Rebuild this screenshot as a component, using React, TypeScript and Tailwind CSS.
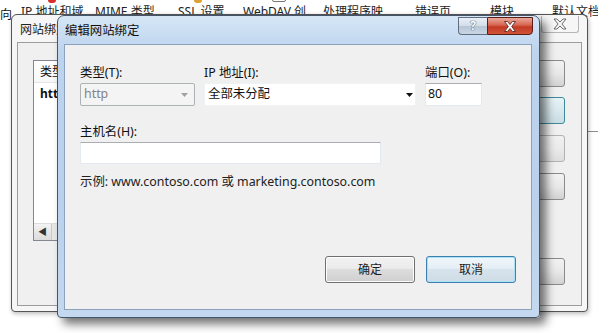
import React from 'react';

const ui = "font-['Noto_Sans','Noto_Sans_CJK_SC',sans-serif]";

const WinButton = ({ label, focused = false }: { label: string; focused?: boolean }) => (
  <div
    className={`w-[90px] h-[27px] rounded-[3px] border flex items-center justify-center text-[12px] text-[#1b1b1b] ${
      focused
        ? 'border-[#3c7fb1] bg-[linear-gradient(#f1f7fb_0%,#e4eef5_45%,#d7e3ec_50%,#cfdbe5_100%)] shadow-[inset_0_0_0_1px_#a9e1f7]'
        : 'border-[#707070] bg-[linear-gradient(#f2f2f2_0%,#ebebeb_45%,#dddddd_50%,#cfcfcf_100%)] shadow-[inset_0_0_0_1px_#fcfcfc]'
    }`}
  >
    {label}
  </div>
);

const BgButton = ({ focused = false }: { focused?: boolean }) => (
  <div
    className={`w-[90px] h-[27px] rounded-[3px] border ${
      focused
        ? 'border-[#3c8a9c] bg-[linear-gradient(#e7f3f7,#c9dde4)]'
        : 'border-[#8a8a8a] bg-[linear-gradient(#f2f2f2_0%,#e8e8e8_50%,#d2d2d2_100%)]'
    }`}
  />
);

export default function App() {
  return (
    <div className={`relative w-[598px] h-[333px] overflow-hidden bg-white ${ui}`}>
      {/* background app strip */}
      <div className="absolute left-0 top-[3px] flex text-[12px] leading-[18px] text-[#222] whitespace-nowrap">
        <span className="ml-[21px] w-[74px]">IP 地址和域</span>
        <span className="w-[83px]">MIME 类型</span>
        <span className="w-[65px]">SSL 设置</span>
        <span className="w-[80px]">WebDAV 创</span>
        <span className="w-[92px]">处理程序映</span>
        <span className="w-[75px]">错误页</span>
        <span className="w-[62px]">模块</span>
        <span>默认文档</span>
      </div>
      <div className="absolute left-[48px] top-[-3px] w-[8px] h-[6px] rounded-full bg-[#d9302c]" />
      <div className="absolute left-[194px] top-[-3px] w-[8px] h-[6px] rounded-full bg-[#e0a030]" />
      <div className="absolute left-[272px] top-[-3px] w-[14px] h-[5px] rounded-[2px] border border-[#777]" />
      <span className="absolute left-0 top-[8px] text-[12px] leading-[14px] text-[#111]">向</span>
      <div className="absolute left-[586px] top-[131px] w-[12px] h-px bg-[#8f8f8f]" />

      {/* background window: 网站绑定 */}
      <div className="absolute left-[11px] top-[14px] w-[577px] h-[298px] rounded-t-[6px] rounded-b-[4px] border border-[#555] bg-[#f6f6f6] shadow-[1px_2px_4px_rgba(0,0,0,0.25)] flex flex-col">
        <div className="h-[27px] flex items-center justify-between pl-[8px] pr-[8px]">
          <span className="text-[12px] text-[#222] mt-[2px]">网站绑定</span>
          <div className="w-[38px] h-[17px] rounded-b-[3px] border border-t-0 border-[#b6b6b6] flex items-center justify-center -mt-[8px]">
            <svg width="16" height="12" viewBox="0 0 16 12">
              <path d="M2 1 L5 1 L8 4 L11 1 L14 1 L10 6 L14 11 L11 11 L8 8 L5 11 L2 11 L6 6 Z" fill="#f4f4f4" stroke="#6d6d6d" strokeWidth="1" />
            </svg>
          </div>
        </div>
        <div className="flex-1 mx-[5px] mb-[5px] border border-[#9c9c9c] bg-[#f0f0f0] flex pt-[17px] pl-[15px] pr-[16px]">
          <div className="flex-1 h-[181px] border border-[#828790] bg-white flex flex-col text-[12px] text-[#111]">
            <div className="h-[22px] flex items-center pl-[6px] border-b border-[#e5e5e5] bg-[linear-gradient(#fff,#f7f8fa)]">类型</div>
            <div className="h-[22px] flex items-center pl-[6px] font-bold">http</div>
            <div className="flex-1" />
            <div className="h-[17px] flex bg-[#e8e8e8] border-t border-[#dcdcdc]">
              <div className="w-[18px] flex items-center justify-center text-[9px] text-[#333] border-r border-[#c8c8c8] bg-[linear-gradient(#f3f3f3,#dcdcdc)]">◀</div>
            </div>
          </div>
          <div className="w-[90px] ml-[10px] flex flex-col">
            <BgButton />
            <div className="mt-[10px]"><BgButton focused /></div>
            <div className="mt-[11px] opacity-60"><BgButton /></div>
            <div className="mt-[11px]"><BgButton /></div>
            <div className="mt-[58px]"><BgButton /></div>
          </div>
        </div>
      </div>

      {/* front dialog: 编辑网站绑定 */}
      <div className="absolute left-[57px] top-[15px] w-[483px] h-[303px] rounded-t-[7px] rounded-b-[4px] border border-[#44546a] bg-[linear-gradient(180deg,#d6e6f6_0%,#bcd4ee_12%,#b9d1ec_60%,#c4d8ef_100%)] shadow-[6px_6px_10px_rgba(0,0,0,0.55)] flex flex-col">
        <div className="relative h-[28px] flex items-center pl-[7px]">
          <span className="text-[12.4px] text-[#111] mt-[3px]">编辑网站绑定</span>
          <div className="absolute right-[6px] top-[1px] flex">
            <div className="w-[29px] h-[18px] rounded-bl-[4px] border border-[#5f6e80] border-r-0 bg-[linear-gradient(#e9eff6_0%,#d3dde8_50%,#b7c6d6_51%,#c8d6e4_100%)] flex items-center justify-center">
              <span className="text-[12px] leading-[12px] font-bold text-white [text-shadow:0_0_1px_#3a4656,0_0_1px_#3a4656]">?</span>
            </div>
            <div className="w-[46px] h-[18px] rounded-br-[4px] border border-[#5b1d15] bg-[linear-gradient(#e9a99b_0%,#d7634f_45%,#c23a24_55%,#d2533a_100%)] flex items-center justify-center">
              <svg width="14" height="11" viewBox="0 0 14 11">
                <path d="M1.5 0.5 L4.5 0.5 L7 3.5 L9.5 0.5 L12.5 0.5 L8.7 5.5 L12.5 10.5 L9.5 10.5 L7 7.5 L4.5 10.5 L1.5 10.5 L5.3 5.5 Z" fill="#fff" stroke="#5a2a22" strokeWidth="0.9" />
              </svg>
            </div>
          </div>
        </div>
        <div className="flex-1 ml-[6px] mr-[7px] mb-[7px] border border-[#8ca2bb] bg-[#f0f0f0] flex flex-col pl-[15px] pr-[15px] text-[12.4px] text-[#111]">
          <div className="flex mt-[20px] gap-[9px]">
            <div className="w-[115px] flex flex-col">
              <span className="leading-[15px]">类型(T):</span>
              <div className="mt-[3px] h-[23px] rounded-[2px] border border-[#adb2b5] bg-[#f4f4f4] flex items-center justify-between pl-[3px] pr-[6px] text-[#838383]">
                <span>http</span>
                <svg width="7" height="4" viewBox="0 0 7 4"><path d="M0 0 H7 L3.5 4 Z" fill="#a0a0a0" /></svg>
              </div>
            </div>
            <div className="w-[212px] flex flex-col">
              <span className="leading-[15px]">IP 地址(I):</span>
              <div className="mt-[3px] h-[23px] bg-white border border-[#f0f3f6] flex items-center justify-between pl-[3px] pr-[2px]">
                <span>全部未分配</span>
                <svg width="7" height="4" viewBox="0 0 7 4"><path d="M0 0 H7 L3.5 4 Z" fill="#111" /></svg>
              </div>
            </div>
            <div className="w-[57px] flex flex-col">
              <span className="leading-[15px]">端口(O):</span>
              <div className="mt-[3px] h-[23px] bg-white border border-[#e3e9ef] border-t-[#abadb3] flex items-center pl-[2px]">
                <span>80</span>
              </div>
            </div>
          </div>
          <span className="mt-[18px] leading-[15px]">主机名(H):</span>
          <div className="mt-[3px] w-[301px] h-[22px] bg-white border border-[#e3e9ef] border-t-[#abadb3]" />
          <span className="mt-[10px] leading-[15px] text-[#222]">示例: www.contoso.com 或 marketing.contoso.com</span>
          <div className="flex-1" />
          <div className="flex justify-end gap-[11px] mb-[26px]">
            <WinButton label="确定" />
            <WinButton label="取消" focused />
          </div>
        </div>
      </div>
    </div>
  );
}
